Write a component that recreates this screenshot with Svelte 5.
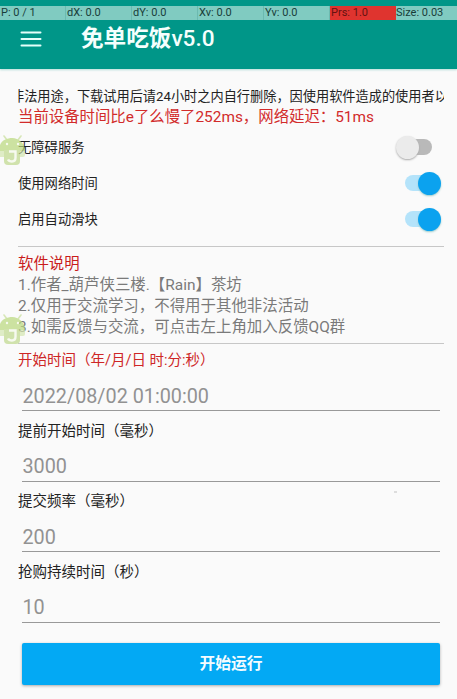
<script lang="ts">
	const pointer = ["P: 0 / 1", "dX: 0.0", "dY: 0.0", "Xv: 0.0", "Yv: 0.0", "Prs: 1.0", "Size: 0.03"];

	let switches = $state([
		{ label: "无障碍服务", on: false },
		{ label: "使用网络时间", on: true },
		{ label: "启用自动滑块", on: true },
	]);

	const notes = [
		"1.作者_葫芦侠三楼.【Rain】茶坊",
		"2.仅用于交流学习，不得用于其他非法活动",
		"3.如需反馈与交流，可点击左上角加入反馈QQ群",
	];

	const fields = [
		{ label: "开始时间（年/月/日 时:分:秒）", value: "2022/08/02 01:00:00", red: true },
		{ label: "提前开始时间（毫秒）", value: "3000", red: false },
		{ label: "提交频率（毫秒）", value: "200", red: false },
		{ label: "抢购持续时间（秒）", value: "10", red: false },
	];
</script>

{#snippet robot()}
	<svg viewBox="0 0 28 34" width="28" height="34">
		<path d="M4 3l3 4M21 3l-3 4" stroke="#c9df9b" stroke-width="1.6" stroke-linecap="round" />
		<path d="M0 18V12C2 7 7 5 12.500 5S25 10 25 18z" fill="#b9d97c" />
		<circle cx="7" cy="11" r="1.200" fill="#f5faeb" />
		<circle cx="18" cy="11" r="1.200" fill="#f5faeb" />
		<path d="M0 18h4v6H0zM20 18h5v4q0 2-2 2h-3z" fill="#d5e7b1" />
		<path d="M4 17h16v11q0 4-4 4H8q-4 0-4-4z" fill="#bfd98c" />
		<path d="M9 18.500h6.500v6q0 4-3.500 4-3 0-4-2" fill="none" stroke="#f6faed" stroke-width="2.400" />
	</svg>
{/snippet}

<div class="screen">
	<header>
		<div class="pointer">
			{#each pointer as item, i}
				<span class:hot={i === 5}>{item}</span>
			{/each}
		</div>
		<div class="toolbar">
			<svg width="22" height="16" viewBox="0 0 22 16">
				<path d="M1.500 1.500h19M1.500 8h19M1.500 14.500h19" stroke="#e4fffa" stroke-width="2" stroke-linecap="round" />
			</svg>
			<h1>免单吃饭<span>v5.0</span></h1>
		</div>
	</header>

	<main>
		<div class="marquee"><span>非法用途，下载试用后请24小时之内自行删除，因使用软件造成的使用者以</span></div>
		<p class="status">当前设备时间比e了么慢了252ms，网络延迟：51ms</p>

		<div class="switches">
			{#each switches as item}
				<div class="row">
					<span>{item.label}</span>
					<button class="switch" class:on={item.on} aria-label={item.label} onclick={() => (item.on = !item.on)}>
						<i></i>
					</button>
				</div>
			{/each}
		</div>

		<section class="notes">
			<h2>软件说明</h2>
			{#each notes as note}
				<p>{note}</p>
			{/each}
		</section>

		<section class="fields">
			{#each fields as field}
				<label class:red={field.red}>
					<span>{field.label}</span>
					<input placeholder={field.value} />
				</label>
			{/each}
		</section>

		<button class="run">开始运行</button>
	</main>

	<div class="float first">{@render robot()}</div>
	<div class="float second">{@render robot()}</div>
	<span class="speck"></span>
</div>

<style>
	:global(body) {
		background: #fafafa;
	}
	.screen {
		position: relative;
		box-sizing: border-box;
		width: 457px;
		height: 699px;
		overflow: hidden;
		background: #fafafa;
		color: #222;
		font-family: Roboto, "Noto Sans CJK SC", sans-serif;
		white-space: nowrap;
	}
	p,
	h1,
	h2 {
		margin: 0;
		font-weight: 400;
	}
	header {
		box-sizing: border-box;
		height: 69px;
		padding-top: 6px;
		background: #009688;
		box-shadow: 0 1px 2px #b5ddd8;
	}
	.pointer {
		display: grid;
		grid-template-columns: 66px repeat(4, 66px) 66px 1fr;
		height: 14px;
		background: #80cbc1;
		font-size: 11px;
		line-height: 14px;
		color: #183d39;
	}
	.pointer span {
		box-sizing: border-box;
		padding-left: 1px;
		border-right: 1px solid #6bbab0;
	}
	.pointer .hot {
		background: #df342f;
		color: #641210;
		border-color: #df342f;
	}
	.pointer span:last-child {
		padding-left: 0;
		border: 0;
	}
	.toolbar {
		display: flex;
		align-items: center;
		gap: 39px;
		height: 37px;
		padding-left: 20px;
	}
	h1 {
		padding-top: 1px;
		font-size: 22.6px;
		font-weight: 700;
		line-height: 36px;
		color: #f5fffd;
	}
	h1 span {
		font-weight: 500;
	}
	main {
		padding: 18px 13px 0 18px;
	}
	.marquee {
		overflow: hidden;
		height: 20px;
		font-size: 13.2px;
		line-height: 20px;
	}
	.marquee span {
		display: block;
		margin-left: -7px;
	}
	.status {
		height: 22px;
		font-size: 15.4px;
		line-height: 20px;
		color: #d22b2b;
	}
	.row {
		display: flex;
		align-items: center;
		justify-content: space-between;
		height: 36px;
		padding-right: 3px;
		font-size: 13.3px;
	}
	.row span {
		margin-top: -1px;
	}
	.switches {
		height: 117px;
		border-bottom: 1px solid #c7c7c7;
	}
	.switch {
		display: flex;
		align-items: center;
		width: 46px;
		height: 26px;
		padding: 0;
		border: 0;
		background: none;
	}
	.switch::before {
		content: "";
		width: 28px;
		height: 16px;
		margin-left: 9px;
		border-radius: 8px;
		background: #b9b9b9;
	}
	.switch i {
		width: 23px;
		height: 23px;
		margin-left: -36px;
		border-radius: 50%;
		background: #ebebeb;
		box-shadow: 0 1px 2px #aaa;
	}
	.switch.on::before {
		margin-left: 10px;
		background: #b4e3fa;
	}
	.switch.on i {
		margin-left: -15px;
		background: #0ba2ef;
		box-shadow: 0 1px 2px #9cc;
	}
	.notes {
		height: 97px;
		box-sizing: border-box;
		padding-top: 7px;
		border-bottom: 1px solid #c7c7c7;
		font-size: 15.45px;
		line-height: 21px;
		color: #7a7a7a;
	}
	.notes h2 {
		font-size: 15.4px;
		color: #c91c1c;
	}
	.fields {
		padding-top: 5px;
	}
	label {
		display: flex;
		flex-direction: column;
		height: 70.6px;
		font-size: 14.5px;
		line-height: 24px;
	}
	label.red {
		color: #ce2626;
	}
	input {
		box-sizing: border-box;
		height: 34px;
		margin: 4px 4px 0;
		padding: 5px 0 0 0.500px;
		border: 0;
		border-bottom: 1.500px solid #999;
		outline: 0;
		background: none;
		font: 19.8px Roboto, sans-serif;
		color: #333;
	}
	input::placeholder {
		color: #929292;
	}
	.run {
		display: block;
		width: 418px;
		height: 42px;
		margin: 12px 4px 0;
		padding: 0;
		border: 0;
		border-radius: 2px;
		background: #03a9f4;
		box-shadow: 0 1px 3px #aaa;
		font: 700 15.8px/42px Roboto, "Noto Sans CJK SC", sans-serif;
		color: #f4fcff;
	}
	.float {
		position: absolute;
		left: 0;
		height: 34px;
		opacity: 0.7;
	}
	.float.first {
		top: 133px;
	}
	.float.second {
		top: 312px;
	}
	.speck {
		position: absolute;
		left: 394px;
		top: 491px;
		width: 3px;
		height: 2px;
		background: #ddd;
	}
</style>
